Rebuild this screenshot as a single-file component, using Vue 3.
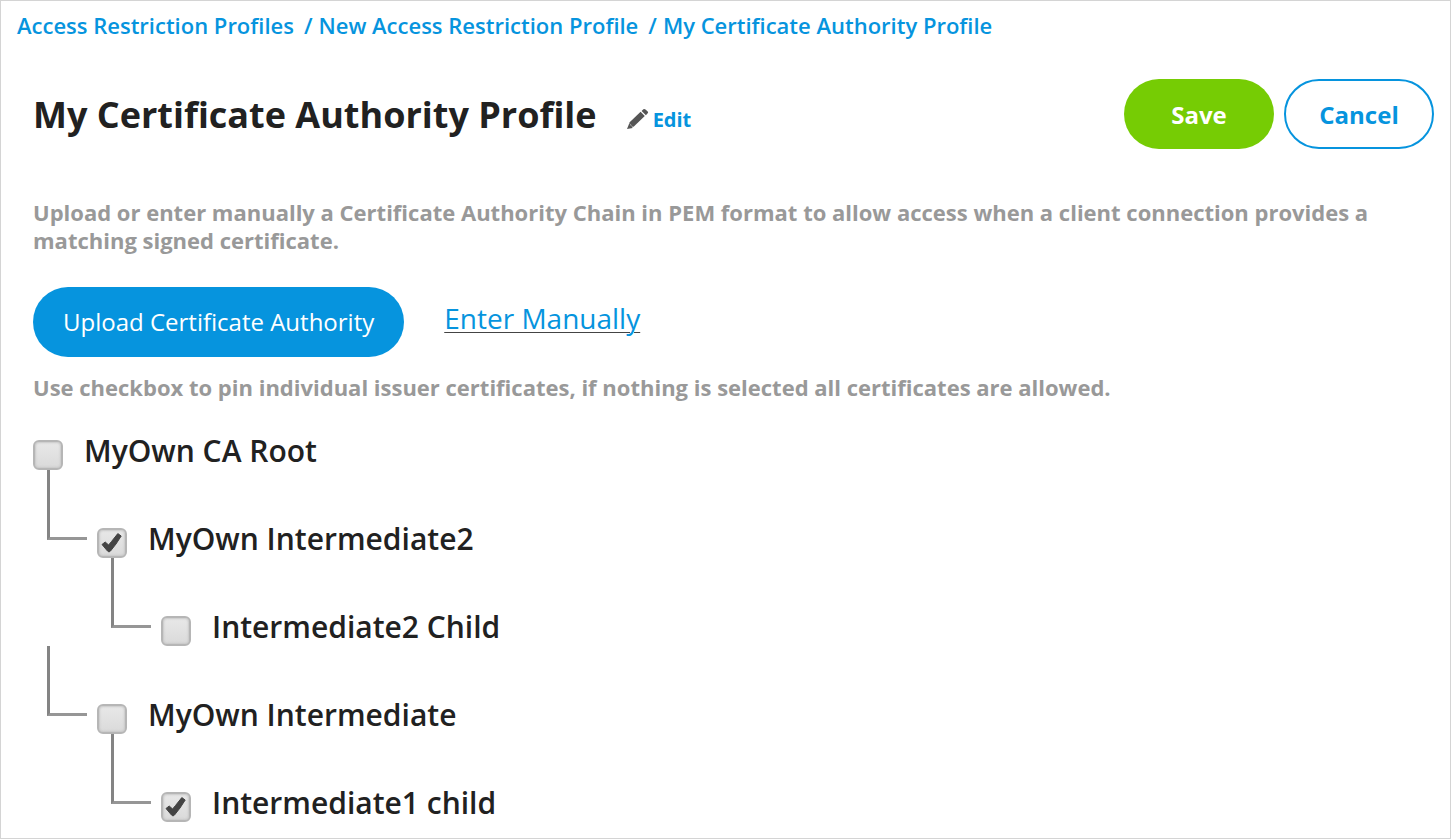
<script setup>
import { ref } from 'vue'
const crumbs = ['Access Restriction Profiles', 'New Access Restriction Profile', 'My Certificate Authority Profile']
const nodes = ref([
  { id: 'root', name: 'MyOwn CA Root', level: 0, checked: false },
  { id: 'int2', name: 'MyOwn Intermediate2', level: 1, checked: true },
  { id: 'int2c', name: 'Intermediate2 Child', level: 2, checked: false },
  { id: 'int1', name: 'MyOwn Intermediate', level: 1, checked: false },
  { id: 'int1c', name: 'Intermediate1 child', level: 2, checked: true },
])
</script>

<template>
  <div class="page">
    <nav class="crumbs" aria-label="Breadcrumb">
      <template v-for="(c, i) in crumbs" :key="c">
        <span v-if="i" class="sep">/</span>
        <a href="#">{{ c }}</a>
      </template>
    </nav>
    <header class="head">
      <h1>My Certificate Authority Profile</h1>
      <a class="edit" href="#">
        <svg width="22" height="22" viewBox="0 0 22 22" aria-hidden="true">
          <path fill="#555" d="M0 21L2.200 15.600L5.800 20ZM2.400 14.400L13.600 3.800L17.800 8L6.600 18.800L4.600 18.400L4 16.600L2.600 16.200ZM14.600 2.900L16.400 1.200Q17.400 .5 18.500 1.500L20.700 3.500Q21.500 4.300 20.900 5.100L18.900 7.200Z" />
        </svg>
        <span>Edit</span>
      </a>
      <div class="actions">
        <button class="btn save" type="button">Save</button>
        <button class="btn cancel" type="button">Cancel</button>
      </div>
    </header>
    <main>
      <p class="note intro">Upload or enter manually a Certificate Authority Chain in PEM format to allow access when a client connection provides a matching signed certificate.</p>
      <div class="sources">
        <button class="btn upload" type="button">Upload Certificate Authority</button>
        <a class="manual" href="#">Enter Manually</a>
      </div>
      <p class="note">Use checkbox to pin individual issuer certificates, if nothing is selected all certificates are allowed.</p>
      <ul class="tree">
        <li v-for="n in nodes" :key="n.id" :class="'level' + n.level">
          <span v-if="n.level" class="branch"></span>
          <span class="box">
            <input :id="n.id" v-model="n.checked" type="checkbox" />
            <svg v-if="n.checked" class="tick" viewBox="0 0 30 30" aria-hidden="true">
              <path fill="#444" stroke="#444" stroke-width="1" stroke-linejoin="round" d="M5 16.500L8.200 14L11.600 17L14.500 13.500L20.800 5.600L24.200 8L19 16L13.500 23L12 24L10.500 23Z" />
            </svg>
          </span>
          <label :for="n.id">{{ n.name }}</label>
        </li>
      </ul>
    </main>
  </div>
</template>

<style>
body { background: #fff; }
</style>

<style scoped>
* { box-sizing: border-box; }
.page {
  min-height: 100vh;
  border: 1px solid #d4d4d4;
  font-family: "Open Sans", "Noto Sans", sans-serif;
  color: #212121;
  overflow: hidden;
}
a { color: #0694de; text-decoration: none; }
.crumbs {
  display: flex;
  padding: 9px 16px 0;
  font-size: 22px;
  line-height: 30px;
  font-weight: 600;
  color: #0694de;
}
.sep { margin: 0 6px 0 10px; }
.head {
  display: flex;
  align-items: center;
  margin: 39px 16px 0 32px;
}
h1 { margin: 0; padding-top: 2px; font-size: 36px; line-height: 50px; font-weight: 700; }
.edit {
  display: flex;
  align-items: center;
  gap: 4px;
  margin: 10px 0 0 30px;
  font-size: 20px;
  line-height: 28px;
  font-weight: 700;
}
.edit span { padding-top: 2px; }
.actions { display: flex; gap: 10px; margin-left: auto; }
.btn {
  height: 70px;
  border: 0;
  border-radius: 35px;
  font-family: inherit;
  font-size: 24px;
  line-height: 34px;
  font-weight: 700;
  color: #fff;
}
.save { width: 150px; padding: 2px 0 0; background: #76cc04; }
.cancel { width: 150px; padding: 2px 0 0; border: 2px solid #0694de; background: #fff; color: #0694de; }
main { padding: 0 32px; }
.note { margin: 0; font-size: 22px; line-height: 28px; font-weight: 700; color: #999; }
.intro { margin-top: 49px; }
.sources { display: flex; align-items: center; gap: 40px; margin: 33px 0 16px; }
.upload { padding: 0 30px; background: #0694de; font-weight: 400; }
.manual {
  margin-bottom: 8px;
  font-size: 28px;
  line-height: 38px;
  text-decoration: underline #444;
  text-decoration-thickness: 1px;
  text-underline-offset: 3px;
}
.tree { list-style: none; margin: 23px 0 0; padding: 0; }
li { position: relative; display: flex; align-items: flex-start; gap: 21px; height: 88px; }
li:last-child { height: 56px; }
.level1 { padding-left: 64px; }
.level2 { padding-left: 128px; }
.branch {
  position: absolute;
  top: -42px;
  left: 14px;
  width: 40px;
  height: 70px;
  border: solid #848484;
  border-width: 0 0 3px 3px;
  border-bottom-color: #969696;
}
.level2 .branch { left: 78px; }
.box { position: relative; display: flex; margin-top: 16px; }
input {
  appearance: none;
  width: 30px;
  height: 30px;
  margin: 0;
  border: 2px solid #b6b6b6;
  border-radius: 6px;
  background: linear-gradient(#e8e8e8, #dadada);
  box-shadow: inset 0 0 2px 1px #c8c8c8;
}
.tick { position: absolute; inset: 0; pointer-events: none; }
label { padding-top: 6px; font-size: 30px; line-height: 42px; font-weight: 600; }
</style>
